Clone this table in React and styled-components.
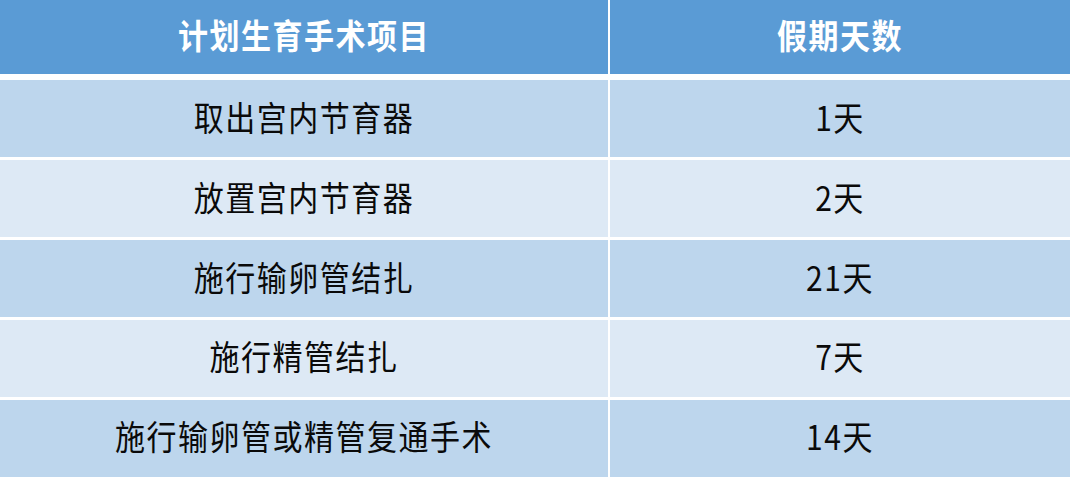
import React from "react";
import styled, { createGlobalStyle } from "styled-components";

const GlobalStyle = createGlobalStyle`
  html, body { margin: 0; padding: 0; background: #ffffff; }
  body { font-family: "Noto Sans CJK SC", "Noto Sans", sans-serif; }
`;

const Table = styled.div`
  width: 1070px;
  height: 477px;
  display: flex;
  flex-direction: column;
  gap: 2.5px;
  background: #ffffff;
`;

const Row = styled.div`
  display: grid;
  grid-template-columns: 608px 1fr;
  column-gap: 2px;
  flex: ${(p) => (p.$header ? "0 0 74px" : "1 1 0")};
  margin-bottom: ${(p) => (p.$header ? "3.5px" : "0")};
`;

const Cell = styled.div`
  display: flex;
  align-items: center;
  justify-content: center;
  background: ${(p) =>
    p.$header ? "#5a9bd5" : p.$alt ? "#dde9f5" : "#bdd6ed"};
  color: ${(p) => (p.$header ? "#ffffff" : "#0a0a0a")};
  font-family: "Noto Sans CJK SC", "Noto Sans", sans-serif;
  font-size: 30px;
  font-weight: ${(p) => (p.$header ? 700 : 400)};
  letter-spacing: 1.5px;
  line-height: 1;
`;

const Text = styled.span`
  display: inline-block;
  transform: translateY(-3px) scaleY(1.12);
`;

const rows = [
  ["取出宫内节育器", "1天"],
  ["放置宫内节育器", "2天"],
  ["施行输卵管结扎", "21天"],
  ["施行精管结扎", "7天"],
  ["施行输卵管或精管复通手术", "14天"],
];

export default function App() {
  return (
    <>
      <GlobalStyle />
      <Table>
        <Row $header>
          <Cell $header>
            <Text>计划生育手术项目</Text>
          </Cell>
          <Cell $header>
            <Text>假期天数</Text>
          </Cell>
        </Row>
        {rows.map(([name, days], i) => (
          <Row key={name}>
            <Cell $alt={i % 2 === 1}>
              <Text>{name}</Text>
            </Cell>
            <Cell $alt={i % 2 === 1}>
              <Text>{days}</Text>
            </Cell>
          </Row>
        ))}
      </Table>
    </>
  );
}
